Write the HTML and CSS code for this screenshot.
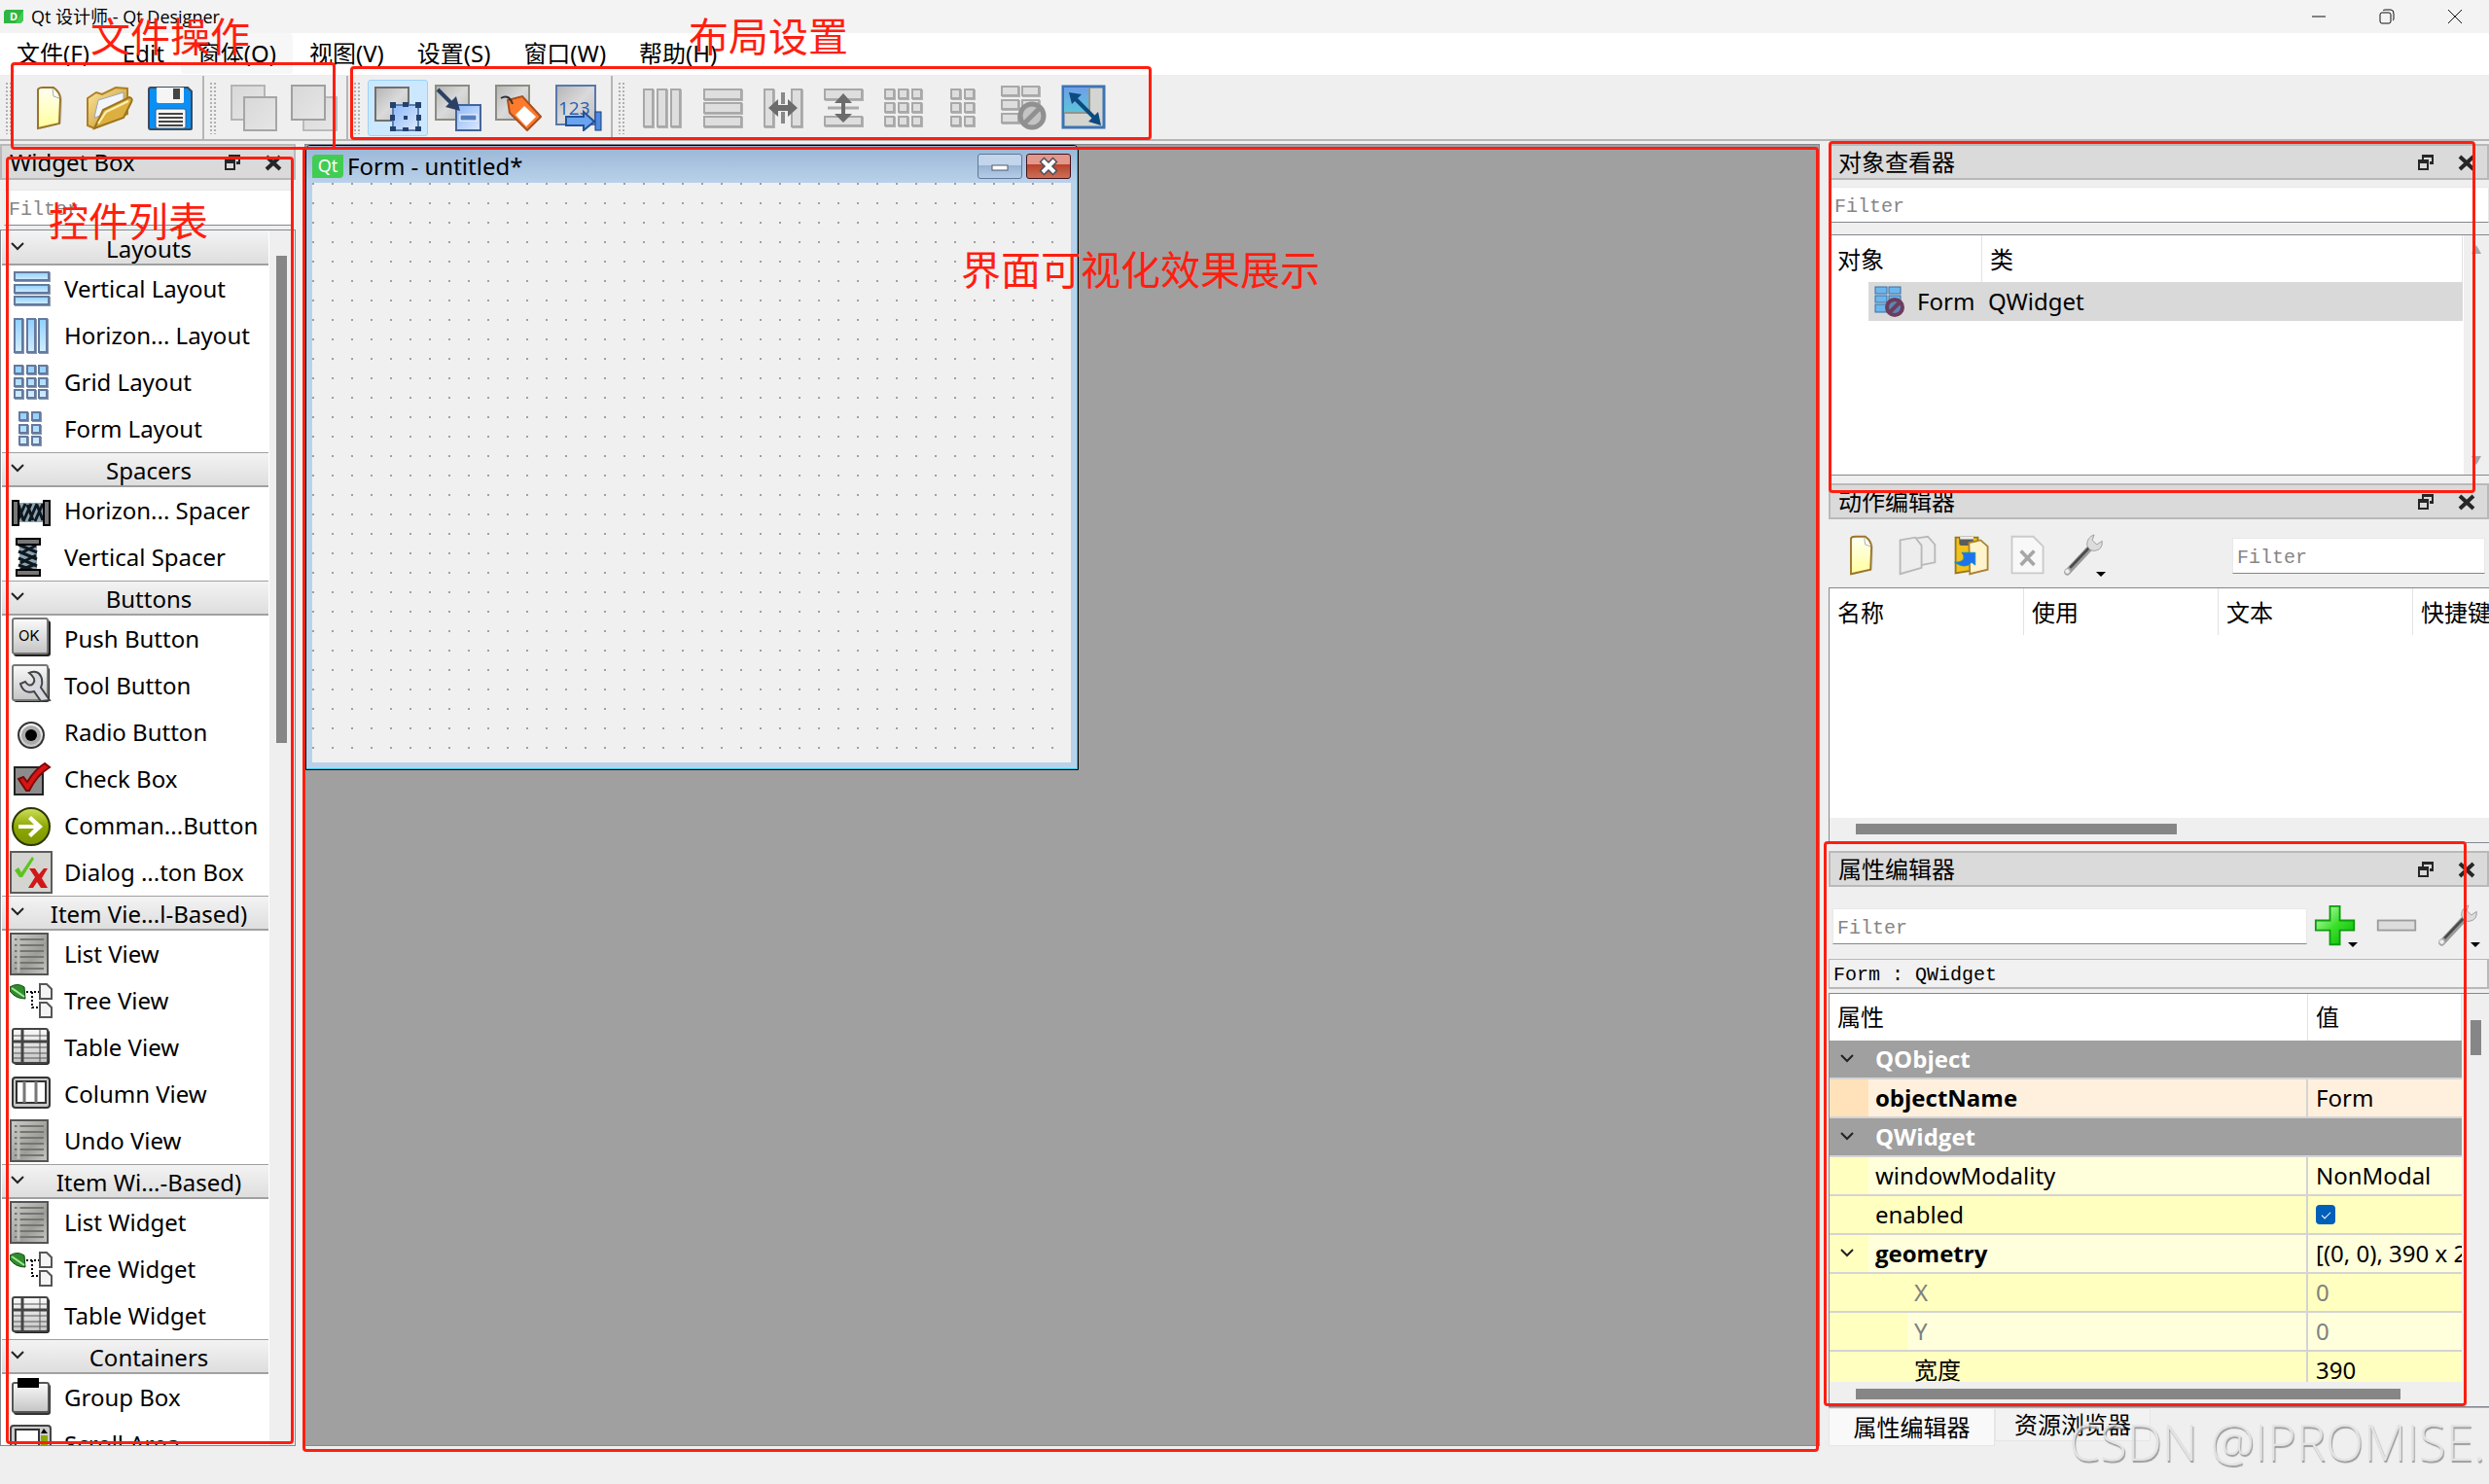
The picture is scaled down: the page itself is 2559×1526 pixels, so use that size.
FILE: index.html
```html
<!DOCTYPE html>
<html lang="zh-CN">
<head>
<meta charset="utf-8">
<title>Qt 设计师 - Qt Designer</title>
<link rel="stylesheet" href="styles.css">
</head>
<body>
<svg class="sprite" aria-hidden="true">
  <defs>
    <linearGradient id="gGrey" x1="0" y1="0" x2="1" y2="1"><stop offset="0" stop-color="#b4b4b4"/><stop offset=".5" stop-color="#dadada"/><stop offset="1" stop-color="#bcbcbc"/></linearGradient>
    <linearGradient id="gFade" x1="0" y1="0" x2="1" y2="1"><stop offset="0" stop-color="#d8d8d8"/><stop offset="1" stop-color="#e6e6e6"/></linearGradient>
    <linearGradient id="gBlue" x1="0" y1="0" x2="0" y2="1"><stop offset="0" stop-color="#8fd0ff"/><stop offset="1" stop-color="#d3edff"/></linearGradient>
    <linearGradient id="gPage" x1="0" y1="0" x2="0" y2="1"><stop offset="0" stop-color="#fffef4"/><stop offset="1" stop-color="#ffff9c"/></linearGradient>
    <linearGradient id="gFold" x1="0" y1="0" x2="1" y2="1"><stop offset="0" stop-color="#ffe9a0"/><stop offset="1" stop-color="#b98a1c"/></linearGradient>
    <linearGradient id="gBtn" x1="0" y1="0" x2="0" y2="1"><stop offset="0" stop-color="#fafafa"/><stop offset="1" stop-color="#c4c4c4"/></linearGradient>
    <linearGradient id="gList" x1="0" y1="0" x2="1" y2="1"><stop offset="0" stop-color="#cfcfcb"/><stop offset=".6" stop-color="#9c9c98"/><stop offset="1" stop-color="#c8c8c4"/></linearGradient>
    <linearGradient id="gLime" x1="0" y1="0" x2="0" y2="1"><stop offset="0" stop-color="#cfe05e"/><stop offset=".5" stop-color="#8ea800"/><stop offset="1" stop-color="#7c9600"/></linearGradient>
    <linearGradient id="gPlus" x1="0" y1="0" x2="1" y2="1"><stop offset="0" stop-color="#d8ffd0"/><stop offset=".5" stop-color="#3de02c"/><stop offset="1" stop-color="#00b400"/></linearGradient>
    <linearGradient id="gSky" x1="0" y1="0" x2="0" y2="1"><stop offset="0" stop-color="#6f9fe8"/><stop offset="1" stop-color="#5cc4d8"/></linearGradient>
    <linearGradient id="gFrame" x1="0" y1="0" x2="1" y2="1"><stop offset="0" stop-color="#8db8f8"/><stop offset="1" stop-color="#dce9ff"/></linearGradient>
  </defs>

  <symbol id="i-app" viewBox="0 0 20 14"><path d="M2 0H20V11L17 14H0V2Z" fill="#2fb541"/><path d="M20 0V11L17 14H12Z" fill="#41cd52"/></symbol>
  <symbol id="i-page" viewBox="0 0 48 48"><path d="M13 6Q14 3 18 3L30 3Q37 9 37 16L36 40L14 46Z" fill="#00000022"/><path d="M12 5Q13 3 17 3L28 3Q35 8 35 15L34 40L12 45Z" fill="url(#gPage)" stroke="#9a7428" stroke-width="2"/><path d="M27 4L28 12L34 14" fill="#fff" stroke="#aaa"/></symbol>
  <symbol id="i-open" viewBox="0 0 48 48"><path d="M1 14L10 8L16 10L30 3L42 4V30L8 45L1 42Z" fill="url(#gFold)" stroke="#b07f22" stroke-width="2"/><path d="M8 34L12 16L38 8V24Z" fill="#f2f5fa" stroke="#9aa6b8"/><path d="M8 45L17 26L44 13Q48 14 46 18L38 34Z" fill="#dcb040" stroke="#9c741c" stroke-width="2"/><path d="M12 40L20 28L43 17" fill="none" stroke="#fff0b0" stroke-width="2"/></symbol>
  <symbol id="i-save" viewBox="0 0 48 48"><path d="M4 3H42L46 7V45Q46 46 44 46H4Q2 46 2 44V5Q2 3 4 3Z" fill="#0a8ff5" stroke="#3c4a58" stroke-width="2"/><path d="M10 3H38V18Q38 19 36 19H12Q10 19 10 17Z" fill="#f5f5f5"/><rect x="27" y="4" width="7" height="11" fill="#444"/><rect x="9" y="25" width="31" height="20" rx="2" fill="#f7f7f7" stroke="#2a5f90"/><path d="M12 30H37M12 34H37M12 38H37M12 42H37" stroke="#444" stroke-width="2"/></symbol>
  <symbol id="i-front" viewBox="0 0 48 48"><rect x="1" y="1" width="34" height="35" fill="url(#gFade)" stroke="#b4b4b4" stroke-width="2"/><rect x="14" y="13" width="33" height="34" fill="url(#gFade)" stroke="#a6a6a6" stroke-width="2"/></symbol>
  <symbol id="i-back" viewBox="0 0 48 48"><rect x="13" y="13" width="34" height="34" fill="url(#gFade)" stroke="#bababa" stroke-width="2"/><rect x="1" y="1" width="34" height="35" fill="url(#gFade)" stroke="#a0a0a0" stroke-width="2"/></symbol>
  <symbol id="i-widgets" viewBox="0 0 48 48"><rect x="1" y="3" width="34" height="34" fill="url(#gGrey)" stroke="#70706c" stroke-width="2"/><rect x="19" y="21" width="26" height="26" fill="url(#gFrame)" stroke="#5a7fae" stroke-width="2"/><path d="M16 18h6v6h-6zM29 18h6v5h-6zM42 18h6v6h-6zM16 31h5v6h-5zM43 31h5v6h-5zM16 43h6v5h-6zM29 44h6v4h-6zM42 43h6v5h-6zM30 32h4v4h-4z" fill="#24416e"/></symbol>
  <symbol id="i-signals" viewBox="0 0 48 48"><rect x="1" y="1" width="34" height="35" fill="url(#gGrey)" stroke="#8c8c84" stroke-width="2"/><rect x="22" y="21" width="25" height="26" fill="url(#gFrame)" stroke="#44659a" stroke-width="2"/><rect x="26" y="31" width="17" height="6" fill="#5580c0" stroke="#fff"/><path d="M3 5L18 20" stroke="#2b4064" stroke-width="4"/><path d="M26 27L11 23L22 12Z" fill="#2b4064"/></symbol>
  <symbol id="i-buddies" viewBox="0 0 48 48"><rect x="1" y="1" width="34" height="35" fill="url(#gGrey)" stroke="#8c8c84" stroke-width="2"/><path d="M13 16L28 12L47 33L33 47L15 29Z" fill="#ff7a2c" stroke="#a85020" stroke-width="2"/><path d="M30 22L42 33L32 43L21 31Z" fill="#fff"/><path d="M6 14Q14 9 18 20" fill="none" stroke="#333" stroke-width="2"/></symbol>
  <symbol id="i-tab" viewBox="0 0 48 48"><rect x="1" y="1" width="40" height="40" fill="url(#gGrey)" stroke="#5878ac" stroke-width="2"/><text x="3" y="31" class="icon-num">123</text><path d="M11 33H29V28L40 38L29 47V42H11Z" fill="#6aa4f0" stroke="#24509a" stroke-width="2"/><rect x="41" y="28" width="6" height="19" fill="#4d8ae0" stroke="#1c3c78"/></symbol>
  <symbol id="i-cols" viewBox="0 0 48 48"><g class="grey-bars"><rect x="5" y="5" width="9" height="38"/><rect x="19" y="5" width="9" height="38"/><rect x="33" y="5" width="9" height="38"/></g></symbol>
  <symbol id="i-rows" viewBox="0 0 48 48"><g class="grey-bars"><rect x="5" y="5" width="38" height="10"/><rect x="5" y="19" width="38" height="10"/><rect x="5" y="33" width="38" height="10"/></g></symbol>
  <symbol id="i-hsplit" viewBox="0 0 48 48"><g class="grey-bars"><rect x="5" y="5" width="9" height="38"/><rect x="33" y="5" width="10" height="38"/></g><path d="M24 8V40" stroke="#888" stroke-width="4" stroke-dasharray="12 8"/><path d="M9 24L19 15V21H29V15L39 24L29 33V27H19V33Z" fill="#6c6c6c"/></symbol>
  <symbol id="i-vsplit" viewBox="0 0 48 48"><g class="grey-bars"><rect x="5" y="5" width="38" height="10"/><rect x="5" y="33" width="38" height="9"/></g><path d="M8 24H40" stroke="#aaa" stroke-width="3"/><path d="M24 9L33 19H26V30H33L24 39L15 30H22V19H15Z" fill="#6c6c6c"/></symbol>
  <symbol id="i-grid" viewBox="0 0 48 48"><g class="grey-bars"><path d="M5 5h9v9h-9zM19 5h9v9h-9zM33 5h9v9h-9zM5 19h9v9h-9zM19 19h9v9h-9zM33 19h9v9h-9zM5 33h9v9h-9zM19 33h9v9h-9zM33 33h9v9h-9z"/></g></symbol>
  <symbol id="i-form" viewBox="0 0 48 48"><g class="grey-bars"><path d="M11 5h9v9h-9zM25 5h9v9h-9zM11 19h9v9h-9zM25 19h9v9h-9zM11 33h9v9h-9zM25 33h9v9h-9z"/></g></symbol>
  <symbol id="i-break" viewBox="0 0 48 48"><g class="grey-bars"><path d="M1 2h17v9h-17zM22 2h17v9h-17zM1 16h17v9h-17zM22 16h17v9h-17zM1 30h17v9h-17z"/></g><circle cx="32" cy="32" r="12" fill="#c4c4c4" stroke="#909090" stroke-width="5"/><path d="M24 40L40 24" stroke="#909090" stroke-width="5"/></symbol>
  <symbol id="i-adjust" viewBox="0 0 48 48"><rect x="2" y="2" width="42" height="42" fill="#d4d4d0" stroke="#3b74b4" stroke-width="3"/><rect x="3" y="3" width="26" height="25" fill="url(#gSky)"/><path d="M3 29H29V3" fill="none" stroke="#8f968f" stroke-width="2"/><path d="M14 14L36 36" stroke="#0d4a80" stroke-width="4"/><path d="M8 8L21 10L11 20ZM41 42L28 38L38 28Z" fill="#0d4a80"/></symbol>
  <symbol id="i-copy" viewBox="0 0 48 48"><g fill="#ededed" stroke="#b8b8b8" stroke-width="2"><path d="M22 5L36 3L44 12V32L24 36Z"/><path d="M5 7L22 4L29 13V38L5 45Z"/></g></symbol>
  <symbol id="i-paste" viewBox="0 0 48 48"><path d="M5 4H30V40L5 44Z" fill="#f1c21c" stroke="#9a7616" stroke-width="2"/><rect x="9" y="3" width="16" height="10" rx="2" fill="#5c5c5c"/><path d="M10 3H25V6H10Z" fill="#eee"/><path d="M20 10L33 7L41 14V40L21 45Z" fill="#fff3cc" stroke="#a98332" stroke-width="2"/><path d="M4 32Q16 32 14 24L12 21H27V35L23 32Q16 40 4 32Z" fill="#1e72ee" stroke="#0f8fc0"/></symbol>
  <symbol id="i-del" viewBox="0 0 48 48"><path d="M6 3H30L41 14V44H6Z" fill="#f8f8f8" stroke="#cacaca" stroke-width="2"/><path d="M16 19L31 35M31 19L16 35" stroke="#a6a6a6" stroke-width="4"/></symbol>
  <symbol id="i-wrench" viewBox="0 0 48 48"><path d="M6 43L33 14" stroke="#9a9a9a" stroke-width="7" stroke-linecap="round"/><path d="M9 38L30 16" stroke="#4a4a4a" stroke-width="3"/><path d="M28 12Q28 4 36 1L34 7L39 12L45 8Q46 18 36 19Q30 19 28 12Z" fill="#dcdcdc" stroke="#9a9a9a"/><circle cx="6" cy="42" r="3" fill="#eee" stroke="#aaa"/></symbol>
  <symbol id="i-plus" viewBox="0 0 48 48"><path d="M18 2H29V18H45V29H29V45H18V29H2V18H18Z" fill="url(#gPlus)" stroke="#0c9c0c" stroke-width="2"/></symbol>
  <symbol id="i-minus" viewBox="0 0 48 48"><rect x="3" y="18" width="42" height="11" fill="#dcdcdc" stroke="#9c9c9c" stroke-width="2"/></symbol>
  <symbol id="i-float" viewBox="0 0 18 18"><path d="M5 1H17V11H13V8H15V4H7V6H5Z" fill="#262626"/><path d="M1 6H12V17H1Z" fill="#262626"/><path d="M3 10H10V15H3Z" fill="#dadada"/></symbol>
  <symbol id="i-close" viewBox="0 0 18 18"><path d="M2 3L16 16M16 3L2 16" stroke="#262626" stroke-width="4"/></symbol>
  <symbol id="i-chev" viewBox="0 0 14 14"><path d="M1 4L7 10L13 4" fill="none" stroke="#222" stroke-width="2"/></symbol>

  <symbol id="w-rows" viewBox="0 0 44 44"><g class="blue-bars"><rect x="5" y="5" width="35" height="8"/><rect x="5" y="18" width="35" height="8"/><rect x="5" y="30" width="35" height="8"/></g></symbol>
  <symbol id="w-cols" viewBox="0 0 44 44"><g class="blue-bars"><rect x="5" y="5" width="8" height="34"/><rect x="18" y="5" width="8" height="34"/><rect x="30" y="5" width="8" height="34"/></g></symbol>
  <symbol id="w-grid" viewBox="0 0 44 44"><g class="blue-bars"><path d="M5 5h8v8h-8zM18 5h8v8h-8zM30 5h8v8h-8zM5 18h8v8h-8zM18 18h8v8h-8zM30 18h8v8h-8zM5 30h8v8h-8zM18 30h8v8h-8zM30 30h8v8h-8z"/></g></symbol>
  <symbol id="w-form" viewBox="0 0 44 44"><g class="blue-bars"><path d="M10 5h8v8h-8zM23 5h8v8h-8zM10 18h8v8h-8zM23 18h8v8h-8zM10 30h8v8h-8zM23 30h8v8h-8z"/></g></symbol>
  <symbol id="w-hspace" viewBox="0 0 44 44"><rect x="6" y="14" width="32" height="20" fill="#8ba4b4"/><path d="M8 33L16 15M14 33L22 15M20 33L28 15M26 33L34 15M9 16L14 32M18 16L24 32M28 16L34 32" stroke="#10181e" stroke-width="3"/><rect x="3" y="12" width="6" height="25" fill="#777" stroke="#000" stroke-width="2"/><rect x="35" y="12" width="6" height="25" fill="#777" stroke="#000" stroke-width="2"/></symbol>
  <symbol id="w-vspace" viewBox="0 0 44 44"><rect x="10" y="7" width="18" height="30" fill="#8ba4b4"/><path d="M9 9L28 17M9 16L28 24M9 23L28 31M9 30L28 37M27 10L11 18M27 20L11 28M27 29L11 35" stroke="#10181e" stroke-width="3"/><rect x="7" y="3" width="24" height="6" fill="#777" stroke="#000" stroke-width="2"/><rect x="7" y="35" width="24" height="6" fill="#777" stroke="#000" stroke-width="2"/></symbol>
  <symbol id="w-push" viewBox="0 0 44 44"><rect x="4" y="3" width="38" height="37" rx="3" fill="#222"/><rect x="3" y="1" width="36" height="36" rx="2" fill="url(#gBtn)" stroke="#777" stroke-width="2"/><text x="9" y="24" class="icon-ok">OK</text></symbol>
  <symbol id="w-tool" viewBox="0 0 44 44"><rect x="4" y="3" width="37" height="36" rx="3" fill="#222"/><rect x="3" y="1" width="36" height="36" rx="2" fill="url(#gBtn)" stroke="#777" stroke-width="2"/><path d="M20 9Q30 5 33 15Q34 20 32 24L41 37L32 38L25 28Q14 31 11 20L16 18Q20 24 24 20Q28 15 20 9Z" fill="#d8d8e0" stroke="#444" stroke-width="2"/></symbol>
  <symbol id="w-radio" viewBox="0 0 44 44"><circle cx="22" cy="25" r="13" fill="url(#gBtn)" stroke="#333" stroke-width="2"/><circle cx="22" cy="25" r="10" fill="#aaa"/><circle cx="22" cy="25" r="6" fill="#000"/></symbol>
  <symbol id="w-check" viewBox="0 0 44 44"><rect x="5" y="10" width="29" height="28" fill="#8c8c8c" stroke="#222" stroke-width="2"/><path d="M9 22L14 20L18 25Q26 12 36 6L41 10Q28 18 20 34H17Z" fill="#d81414" stroke="#7c0808" stroke-width="2"/></symbol>
  <symbol id="w-cmd" viewBox="0 0 44 44"><circle cx="22" cy="23" r="19" fill="url(#gLime)" stroke="#2c3600" stroke-width="2"/><path d="M9 21H25L19 15L22 12L34 23L22 34L19 31L25 25H9Z" fill="#fff"/></symbol>
  <symbol id="w-dialog" viewBox="0 0 44 44"><rect x="1" y="1" width="42" height="42" fill="#d4d4d0" stroke="#5c5c5c" stroke-width="2"/><path d="M5 20L9 17L12 22L23 6L25 8L13 27H10Z" fill="#5cc41c"/><path d="M20 18H26L30 24L35 18H39L33 28L39 38H32L28 32L24 38H19L26 27Z" fill="#d01818"/></symbol>
  <symbol id="w-list" viewBox="0 0 44 44"><rect x="1" y="1" width="38" height="42" fill="url(#gList)" stroke="#555" stroke-width="2"/><path d="M5 7H35M5 13H35M5 19H35M5 25H35M5 31H35M5 37H35" stroke="#747470" stroke-width="2"/><path d="M9 3V41" stroke="#bdbdb9" stroke-width="3"/></symbol>
  <symbol id="w-tree" viewBox="0 0 44 44"><path d="M0 8Q8 3 15 8L16 20Q6 20 0 12Z" fill="#2f8c2a" stroke="#0f4a10"/><path d="M2 9L15 18" stroke="#a6e6a0" stroke-width="2"/><path d="M17 13H30M23 13V30M23 29H30" fill="none" stroke="#000" stroke-width="2" stroke-dasharray="2 2"/><g fill="#f4f4f4" stroke="#555" stroke-width="2"><path d="M31 5H38L43 10V20H31Z"/><path d="M31 24H38L43 29V39H31Z"/></g></symbol>
  <symbol id="w-table" viewBox="0 0 44 44"><rect x="4" y="4" width="37" height="36" rx="3" fill="#222"/><rect x="3" y="3" width="36" height="35" rx="2" fill="url(#gBtn)" stroke="#444" stroke-width="2"/><path d="M4 10H38M4 22H38M4 28H38M4 33H38M31 4V37" stroke="#555" stroke-width="1"/><path d="M4 16H38M13 4V37" stroke="#444" stroke-width="3"/></symbol>
  <symbol id="w-column" viewBox="0 0 44 44"><rect x="3" y="5" width="38" height="31" rx="3" fill="#c9c9c9" stroke="#333" stroke-width="2"/><rect x="7" y="9" width="30" height="22" fill="#fff" stroke="#333" stroke-width="2"/><path d="M15 9V31M27 9V31" stroke="#777" stroke-width="3"/></symbol>
  <symbol id="w-group" viewBox="0 0 44 44"><rect x="4" y="8" width="38" height="32" rx="3" fill="#333"/><rect x="3" y="7" width="37" height="30" rx="2" fill="url(#gBtn)" stroke="#555" stroke-width="2"/><rect x="8" y="2" width="22" height="10" fill="#000"/></symbol>
  <symbol id="w-scroll" viewBox="0 0 44 44"><rect x="1" y="3" width="41" height="41" rx="3" fill="#ccc" stroke="#444" stroke-width="2"/><rect x="6" y="7" width="24" height="37" fill="#fff" stroke="#333" stroke-width="2"/><rect x="32" y="13" width="7" height="20" fill="#8ea800"/><path d="M32 11L35 6L39 11Z" fill="#000"/></symbol>
  <symbol id="w-broken" viewBox="0 0 32 32"><g fill="#6cb6ee" stroke="#3a6ea4" stroke-width="1"><rect x="1" y="1" width="12" height="7"/><rect x="15" y="1" width="12" height="7"/><rect x="1" y="10" width="12" height="7"/><rect x="15" y="10" width="12" height="7"/><rect x="1" y="19" width="12" height="8"/></g><circle cx="21" cy="22" r="8" fill="#5a86b4" stroke="#6e3c5c" stroke-width="4"/><path d="M15 28L27 16" stroke="#6e3c5c" stroke-width="4"/></symbol>
</svg>

<header class="titlebar">
  <span class="app-icon"><svg><use href="#i-app"/></svg><b>D</b></span>
  <h1>Qt 设计师 - Qt Designer</h1>
  <div class="win-controls">
    <button aria-label="最小化"><svg viewBox="0 0 18 18"><path d="M2 9H16" stroke="#111" stroke-width="1"/></svg></button>
    <button aria-label="还原"><svg viewBox="0 0 18 18" fill="none" stroke="#111" stroke-width="1"><rect x="2" y="5" width="11" height="11" rx="2"/><path d="M5 3Q5 2 8 2H13Q16 2 16 6V11Q16 13 15 13"/></svg></button>
    <button aria-label="关闭"><svg viewBox="0 0 18 18"><path d="M2 2L16 16M16 2L2 16" stroke="#111" stroke-width="1"/></svg></button>
  </div>
</header>

<div class="bars">
  <nav class="menubar">
    <button>文件(F)</button><button>Edit</button><button class="hover">窗体(O)</button><button>视图(V)</button><button>设置(S)</button><button>窗口(W)</button><button>帮助(H)</button>
  </nav>
  <div class="toolbars">
    <div class="toolbar"><i class="grip"></i>
      <button aria-label="新建"><svg><use href="#i-page"/></svg></button>
      <button aria-label="打开"><svg><use href="#i-open"/></svg></button>
      <button aria-label="保存"><svg><use href="#i-save"/></svg></button>
    </div>
    <div class="toolbar"><i class="grip"></i>
      <button aria-label="放到前面"><svg><use href="#i-front"/></svg></button>
      <button aria-label="放到后面"><svg><use href="#i-back"/></svg></button>
    </div>
    <div class="toolbar"><i class="grip"></i>
      <button class="on" aria-label="编辑控件"><svg><use href="#i-widgets"/></svg></button>
      <button aria-label="编辑信号/槽"><svg><use href="#i-signals"/></svg></button>
      <button aria-label="编辑伙伴"><svg><use href="#i-buddies"/></svg></button>
      <button aria-label="编辑 Tab 顺序"><svg><use href="#i-tab"/></svg></button>
    </div>
    <div class="toolbar last"><i class="grip"></i>
      <button aria-label="水平布局"><svg><use href="#i-cols"/></svg></button>
      <button aria-label="垂直布局"><svg><use href="#i-rows"/></svg></button>
      <button aria-label="水平分裂器"><svg><use href="#i-hsplit"/></svg></button>
      <button aria-label="垂直分裂器"><svg><use href="#i-vsplit"/></svg></button>
      <button aria-label="栅格布局"><svg><use href="#i-grid"/></svg></button>
      <button aria-label="表单布局"><svg><use href="#i-form"/></svg></button>
      <button aria-label="打破布局"><svg><use href="#i-break"/></svg></button>
      <button aria-label="调整大小"><svg><use href="#i-adjust"/></svg></button>
    </div>
  </div>
  <div class="mark mark-file"></div><p class="note note-file">文件操作</p>
  <div class="mark mark-layout"></div><p class="note note-layout">布局设置</p>
</div>

<main>
  <aside class="dock widget-box">
    <div class="dock-title"><h2>Widget Box</h2><button aria-label="浮动"><svg><use href="#i-float"/></svg></button><button aria-label="关闭"><svg><use href="#i-close"/></svg></button></div>
    <input class="filter" type="text" placeholder="Filter" aria-label="过滤控件">
    <div class="toolbox">
      <div class="toolbox-list">
        <h3><svg><use href="#i-chev"/></svg>Layouts</h3>
        <ul>
          <li><svg><use href="#w-rows"/></svg>Vertical Layout</li>
          <li><svg><use href="#w-cols"/></svg>Horizon... Layout</li>
          <li><svg><use href="#w-grid"/></svg>Grid Layout</li>
          <li><svg><use href="#w-form"/></svg>Form Layout</li>
        </ul>
        <h3><svg><use href="#i-chev"/></svg>Spacers</h3>
        <ul>
          <li><svg><use href="#w-hspace"/></svg>Horizon... Spacer</li>
          <li><svg><use href="#w-vspace"/></svg>Vertical Spacer</li>
        </ul>
        <h3><svg><use href="#i-chev"/></svg>Buttons</h3>
        <ul>
          <li><svg><use href="#w-push"/></svg>Push Button</li>
          <li><svg><use href="#w-tool"/></svg>Tool Button</li>
          <li><svg><use href="#w-radio"/></svg>Radio Button</li>
          <li><svg><use href="#w-check"/></svg>Check Box</li>
          <li><svg><use href="#w-cmd"/></svg>Comman...Button</li>
          <li><svg><use href="#w-dialog"/></svg>Dialog ...ton Box</li>
        </ul>
        <h3><svg><use href="#i-chev"/></svg>Item Vie...l-Based)</h3>
        <ul>
          <li><svg><use href="#w-list"/></svg>List View</li>
          <li><svg><use href="#w-tree"/></svg>Tree View</li>
          <li><svg><use href="#w-table"/></svg>Table View</li>
          <li><svg><use href="#w-column"/></svg>Column View</li>
          <li><svg><use href="#w-list"/></svg>Undo View</li>
        </ul>
        <h3><svg><use href="#i-chev"/></svg>Item Wi...-Based)</h3>
        <ul>
          <li><svg><use href="#w-list"/></svg>List Widget</li>
          <li><svg><use href="#w-tree"/></svg>Tree Widget</li>
          <li><svg><use href="#w-table"/></svg>Table Widget</li>
        </ul>
        <h3><svg><use href="#i-chev"/></svg>Containers</h3>
        <ul>
          <li><svg><use href="#w-group"/></svg>Group Box</li>
          <li><svg><use href="#w-scroll"/></svg>Scroll Area</li>
        </ul>
      </div>
      <div class="vscroll"><i></i></div>
    </div>
    <div class="mark mark-widgets"></div><p class="note note-widgets">控件列表</p>
  </aside>

  <section class="canvas">
    <div class="form-window">
      <div class="form-title"><span class="qt">Qt</span><h2>Form - untitled*</h2>
        <button class="min" aria-label="最小化"><svg viewBox="0 0 44 24"><rect x="14" y="11" width="16" height="5" fill="#fff" stroke="#4c5a70"/></svg></button>
        <button class="cls" aria-label="关闭"><svg viewBox="0 0 44 24"><path d="M15 5L29 19M29 5L15 19" stroke="#4c4c5c" stroke-width="7"/><path d="M16 6L28 18M28 6L16 18" stroke="#fff" stroke-width="4"/></svg></button>
      </div>
      <div class="form-grid"></div>
    </div>
    <div class="mark mark-canvas"></div><p class="note note-canvas">界面可视化效果展示</p>
  </section>

  <div class="right">
    <section class="dock objects">
      <div class="dock-title"><h2>对象查看器</h2><button aria-label="浮动"><svg><use href="#i-float"/></svg></button><button aria-label="关闭"><svg><use href="#i-close"/></svg></button></div>
      <input class="filter" type="text" placeholder="Filter" aria-label="过滤对象">
      <div class="view">
        <div class="view-body">
          <table>
            <colgroup><col class="c-obj"><col></colgroup>
            <thead><tr><th>对象</th><th>类</th></tr></thead>
            <tbody><tr><td><span class="sel"><svg><use href="#w-broken"/></svg>Form</span></td><td class="selc">QWidget</td></tr></tbody>
          </table>
        </div>
        <div class="arrows"><i class="up"></i><i class="down"></i></div>
      </div>
      <div class="mark mark-objects"></div>
    </section>

    <section class="dock actions">
      <div class="dock-title"><h2>动作编辑器</h2><button aria-label="浮动"><svg><use href="#i-float"/></svg></button><button aria-label="关闭"><svg><use href="#i-close"/></svg></button></div>
      <div class="tools">
        <button aria-label="新建"><svg><use href="#i-page"/></svg></button>
        <button aria-label="复制"><svg><use href="#i-copy"/></svg></button>
        <button aria-label="粘贴"><svg><use href="#i-paste"/></svg></button>
        <button aria-label="删除"><svg><use href="#i-del"/></svg></button>
        <button class="drop" aria-label="配置"><svg><use href="#i-wrench"/></svg></button>
        <input class="filter" type="text" placeholder="Filter" aria-label="过滤动作">
      </div>
      <div class="view stacked">
        <div class="view-body">
          <table>
            <thead><tr><th>名称</th><th>使用</th><th>文本</th><th>快捷键</th></tr></thead>
          </table>
        </div>
        <div class="hscroll"><i></i></div>
      </div>
    </section>

    <section class="dock props">
      <div class="dock-title"><h2>属性编辑器</h2><button aria-label="浮动"><svg><use href="#i-float"/></svg></button><button aria-label="关闭"><svg><use href="#i-close"/></svg></button></div>
      <div class="tools">
        <input class="filter" type="text" placeholder="Filter" aria-label="过滤属性">
        <button class="drop" aria-label="添加"><svg><use href="#i-plus"/></svg></button>
        <button aria-label="移除"><svg><use href="#i-minus"/></svg></button>
        <button class="drop" aria-label="配置"><svg><use href="#i-wrench"/></svg></button>
      </div>
      <p class="class-label">Form : QWidget</p>
      <div class="view stacked">
        <div class="view-row">
          <div class="view-body">
            <table>
              <colgroup><col class="c-prop"><col></colgroup>
              <thead><tr><th>属性</th><th>值</th></tr></thead>
              <tbody>
                <tr class="group"><td colspan="2"><svg><use href="#i-chev"/></svg>QObject</td></tr>
                <tr class="peach"><td><b>objectName</b></td><td>Form</td></tr>
                <tr class="group"><td colspan="2"><svg><use href="#i-chev"/></svg>QWidget</td></tr>
                <tr class="pale"><td>windowModality</td><td>NonModal</td></tr>
                <tr class="deep"><td><label for="enabled">enabled</label></td><td><input id="enabled" type="checkbox" checked></td></tr>
                <tr class="pale"><td><svg><use href="#i-chev"/></svg><b>geometry</b></td><td>[(0, 0), 390 x 298]</td></tr>
                <tr class="deep sub off"><td>X</td><td>0</td></tr>
                <tr class="pale sub off"><td>Y</td><td>0</td></tr>
                <tr class="deep sub"><td>宽度</td><td>390</td></tr>
              </tbody>
            </table>
          </div>
          <div class="vscroll"><i></i></div>
        </div>
        <div class="hscroll"><i></i></div>
      </div>
      <div class="tabs"><button class="active">属性编辑器</button><button>资源浏览器</button></div>
      <div class="mark mark-props"></div>
    </section>
  </div>
</main>
<footer><span class="watermark">CSDN @IPROMISE.</span></footer>
</body>
</html>
```
FILE: styles.css
```css
* { box-sizing: border-box; }
body {
  margin: 0;
  height: 100vh;
  display: flex;
  flex-direction: column;
  overflow: hidden;
  background: #efefef;
  color: #000;
  font: 24px/32px "Noto Sans", "Noto Sans CJK SC", sans-serif;
}
h1, h2, h3, p, ul { margin: 0; padding: 0; font-size: inherit; font-weight: 400; list-style: none; }
button, input { font: inherit; color: inherit; border: 0; padding: 0; margin: 0; background: none; border-radius: 0; }
svg { display: block; flex: none; }
.sprite { position: absolute; width: 0; height: 0; }
.grey-bars { fill: #dedede; stroke: #a8a8a8; stroke-width: 2; filter: drop-shadow(1px 1px 0 #b4b4b4); }
.blue-bars { fill: url(#gBlue); stroke: #64799c; stroke-width: 2; filter: drop-shadow(1px 1px 0 #8a98ac); }
.icon-num { font: 19px "Open Sans", sans-serif; fill: #2a5db0; }
.icon-ok { font: 15px "Inter", sans-serif; fill: #000; }

/* window title */
.titlebar { height: 34px; flex: none; display: flex; align-items: center; background: #f3f3f3; padding-left: 4px; }
.titlebar h1 { flex: 1; padding-left: 8px; font: 18px/32px "Open Sans", "Noto Sans CJK SC", sans-serif; }
.app-icon { position: relative; width: 20px; height: 14px; }
.app-icon svg { width: 20px; height: 14px; }
.app-icon b { position: absolute; inset: 0; font-size: 11px; line-height: 14px; text-align: center; color: #fff; }
.win-controls { display: flex; }
.win-controls button { width: 70px; height: 34px; display: grid; place-items: center; }
.win-controls svg { width: 18px; height: 18px; }

/* menu and tool bars */
.bars { position: relative; flex: none; }
.menubar { display: flex; height: 44px; background: #fff; border-bottom: 1px solid #ececec; }
.menubar button { height: 42px; padding: 0 17px; border-radius: 4px; white-space: nowrap; }
.menubar .hover { background: #f7f7f7; }
.toolbars { display: flex; height: 67px; }
.toolbar { display: flex; align-items: center; padding: 0 2px 0 5px; border-right: 2px solid #b5b5b5; border-bottom: 2px solid #b5b5b5; }
.toolbar.last { flex: 1; border-right: 0; }
.grip { width: 7px; height: 54px; margin-right: 8px; background: radial-gradient(circle, #b0b0b0 1px, transparent 1px) 0 0 / 4px 4px; }
.toolbar button { width: 62px; height: 58px; display: grid; place-items: center; }
.toolbar button svg { width: 48px; height: 48px; }
.toolbar .on { background: #cce8ff; border: 1px solid #99d1ff; border-radius: 3px; }

main { flex: 1; min-height: 0; display: grid; grid-template-columns: 304px 1fr 679px; column-gap: 9px; padding-top: 3px; }

/* docks */
.dock { position: relative; min-height: 0; min-width: 0; display: flex; flex-direction: column; }
.dock-title { flex: none; height: 37px; display: flex; align-items: center; background: #dadada; border: 2px solid #b9b9b9; padding: 1px 12px 0 8px; }
.dock-title h2 { flex: 1; }
.dock-title button { width: 18px; height: 18px; margin-left: 24px; }
.dock-title svg { width: 18px; height: 18px; }
.filter {
  flex: none; height: 37px; padding: 4px 4px 0; background: #fff; outline: 0; min-width: 0;
  border: 1px solid #e8e8e8; border-bottom: 1px solid #85878c;
  font: 20px/24px "Liberation Mono", monospace;
}
.filter::placeholder { color: #858585; opacity: 1; }
.vscroll { flex: none; background: #efefef; }
.vscroll i { display: block; background: #868686; }
.hscroll { flex: none; height: 25px; padding: 7px 0 0 27px; background: #efefef; }
.hscroll i { display: block; height: 11px; background: #868686; }

.widget-box .dock-title { padding: 1px 12px 0 8px; }
.widget-box .filter { margin: 10px 3px 0 4px; }
.toolbox { flex: 1; min-height: 0; margin-top: 4px; display: flex; border: 1px solid #828790; background: #fff; overflow: hidden; }
.toolbox-list { flex: 1; padding: 0 1px; }
.toolbox h3 { position: relative; height: 36px; line-height: 35px; padding-left: 28px; text-align: center; background: linear-gradient(#f3f3f3, #dedede); border-top: 1px solid #a0a0a0; border-bottom: 2px solid #a0a0a0; }
.toolbox h3:first-child { border-top-color: #f3f3f3; }
.toolbox h3 svg { position: absolute; left: 9px; top: 8px; width: 14px; height: 14px; }
.toolbox li { height: 48px; display: flex; align-items: center; gap: 12px; padding-left: 8px; white-space: nowrap; }
.toolbox li svg { width: 44px; height: 44px; }
.toolbox .vscroll { width: 26px; padding: 26px 8px 0 7px; }
.toolbox .vscroll i { height: 501px; }

/* form canvas */
.canvas { position: relative; min-width: 0; background: #a0a0a0; border: 1px solid #828790; }
.form-window { width: 795px; border: 1px solid #000; border-radius: 5px 5px 0 0; background: #b9d1ea; padding: 0 7px 7px 6px; box-shadow: inset -1px -1px 0 #2cc4e0; }
.form-title { height: 38px; margin: 0 -6px; padding: 4px 6px 0; display: flex; align-items: center; gap: 4px; background: linear-gradient(#9ab6d6, #b9d1ea); border-radius: 4px 4px 0 0; }
.form-title h2 { flex: 1; }
.qt { width: 32px; height: 24px; background: #41cd52; color: #fff; border-radius: 4px 0; font-size: 18px; line-height: 23px; text-align: center; }
.form-title button { width: 46px; height: 26px; border-radius: 3px; }
.form-title svg { width: 44px; height: 24px; }
.min { border: 1px solid #5f7896; background: linear-gradient(#c2d5ea 45%, #98b3d2 46%, #b4cce6); }
.cls { border: 1px solid #43101a; background: linear-gradient(#e2988c 40%, #b8422a 42%, #cc7058); }
.form-grid { height: 596px; background: #f0f0f0 conic-gradient(from 90deg at 2px 2px, transparent 50%, #a0a0a0 0 75%, transparent 0) 0 0 / 20px 20px; }

/* right column */
.right { display: grid; grid-template-rows: 341fr 370fr 612fr; gap: 8px; min-height: 0; }
.view { flex: 1; min-height: 0; display: flex; background: #fff; border: 1px solid #828790; border-right: 0; overflow: hidden; }
.view.stacked { flex-direction: column; }
.view-row { flex: 1; min-height: 0; display: flex; }
.view-body { flex: 1; min-height: 0; min-width: 0; overflow: hidden; }
table { width: 100%; table-layout: fixed; border-collapse: separate; border-spacing: 0; }
th { height: 48px; padding: 2px 8px 0; text-align: left; font-weight: 400; border-right: 1px solid #e2e2e2; white-space: nowrap; overflow: hidden; }
td { padding: 0; white-space: nowrap; overflow: hidden; }

.objects .filter { margin: 7px 0 12px 1px; }
.c-obj { width: 157px; }
.sel { display: flex; align-items: center; gap: 12px; height: 40px; margin-left: 40px; padding-left: 6px; background: #d9d9d9; }
.sel svg { width: 32px; height: 32px; }
.selc { background: #d9d9d9; padding-left: 6px; }
.arrows { width: 27px; background: #efefef; padding: 10px 8px; display: flex; flex-direction: column; justify-content: space-between; border-left: 1px solid #fff; }
.arrows i { border: 5px solid transparent; }
.arrows .up { border-top: 0; border-bottom: 9px solid #a6a6a6; }
.arrows .down { border-bottom: 0; border-top: 9px solid #a6a6a6; }

.tools { flex: none; display: flex; align-items: center; height: 70px; }
.tools button { position: relative; width: 48px; height: 48px; }
.tools svg { width: 44px; height: 44px; }
.drop::after { content: ""; position: absolute; right: 3px; bottom: 2px; border: 5px solid transparent; border-top-color: #000; border-bottom: 0; }
.actions .tools { padding: 4px 4px 0 12px; gap: 9px; }
.actions .filter { width: 260px; margin-left: auto; }
.actions table { width: 800px; }
.actions .hscroll { padding-top: 6px; }

.props .tools { padding: 6px 6px 0 4px; gap: 15px; height: 74px; }
.props .tools .filter { flex: 1; margin-right: -8px; }
.class-label { flex: none; height: 31px; margin-bottom: 4px; padding-left: 4px; border: 2px solid #b9b9b9; border-width: 1px 2px 2px 1px; background: #f1f1f1; font: 20px/32px "Liberation Mono", monospace; }
.c-prop { width: 492px; }
.props th { padding-top: 0; }
.props td { height: 40px; padding-left: 47px; border-bottom: 2px solid #d4d4d4; }
.props td + td { padding-left: 8px; }
.props tbody tr:not(.group) td:first-child { border-right: 2px solid #d4d4d4; }
.props b, .group td { font-family: "Open Sans", sans-serif; font-weight: 700; }
.props .group td { background: #a0a0a0; color: #fff; }
.props td svg { float: left; width: 14px; height: 14px; margin: 8px 0 0 -36px; }
.peach td { background: #fff0de; }
.peach td:first-child { background: linear-gradient(90deg, #ffe2ba 40px, #fff0de 40px); }
.pale td { background: #ffffdc; }
.pale td:first-child { background: linear-gradient(90deg, #ffffbf 40px, #ffffdc 40px); }
.deep td { background: #ffffbf; }
.pale.sub td:first-child { background: linear-gradient(90deg, #ffffbf 80px, #ffffdc 80px); }
.props .sub td:first-child { padding-left: 87px; }
.off { color: #808080; }
.props input[type=checkbox] { appearance: none; display: block; width: 20px; height: 20px; background: #005fb8; border-radius: 4px; position: relative; }
.props input[type=checkbox]::before { content: ""; position: absolute; left: 6px; top: 7px; width: 8px; height: 4px; border: solid #fff; border-width: 0 0 1px 1px; transform: rotate(-45deg); }
.props .vscroll { width: 28px; padding: 27px 8px 0 9px; }
.props .vscroll i { height: 36px; }
.actions .hscroll i { width: 330px; }
.props .hscroll i { width: 560px; }
.tabs { flex: none; height: 40px; display: flex; align-items: flex-start; border-top: 1px solid #b0b0b0; }
.tabs button { width: 160px; height: 34px; background: #f2f2f2; border: 1px solid #e6e6e6; line-height: 32px; white-space: nowrap; }
.tabs .active { width: 171px; height: 39px; background: #f9f9f9; line-height: 36px; }

footer { flex: none; height: 39px; position: relative; }
.watermark { position: absolute; right: 4px; bottom: 9px; font: 300 51px/70px "Open Sans", sans-serif; color: #e2e2e2; text-shadow: 1px 2px 1px #8c8c8c; white-space: nowrap; opacity: 0.85; }

/* red annotations */
.mark { position: absolute; border: 3px solid #ff1e10; border-radius: 4px; pointer-events: none; z-index: 2; }
.note { position: absolute; z-index: 3; color: #ff1e10; font: 41px/48px "Noto Sans CJK SC", sans-serif; white-space: nowrap; }
.mark-file { left: 11px; top: 30px; width: 334px; height: 90px; }
.note-file { left: 93px; top: -23px; }
.mark-layout { left: 360px; top: 34px; width: 824px; height: 76px; }
.note-layout { left: 708px; top: -23px; }
.mark-widgets { left: 6px; top: 13px; right: 2px; bottom: 2px; }
.note-widgets { left: 50px; top: 53px; }
.mark-canvas { left: -3px; top: 2px; right: 0; bottom: -7px; }
.note-canvas { left: 674px; top: 102px; }
.mark-objects { left: 0; top: -3px; right: 14px; bottom: -18px; }
.mark-props { left: -5px; top: -10px; right: 23px; bottom: 41px; }
```
